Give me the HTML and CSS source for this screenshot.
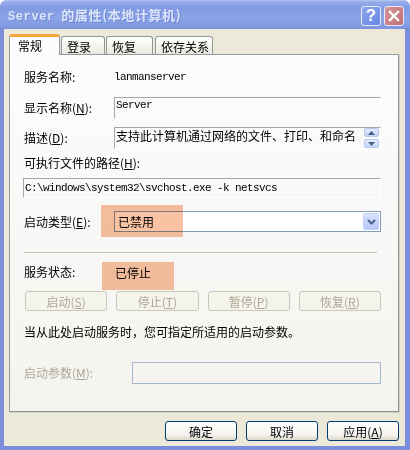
FILE: index.html
```html
<!DOCTYPE html>
<html>
<head>
<meta charset="utf-8">
<link rel="stylesheet" href="styles.css">
</head>
<body>
<div class="window">
  <div class="titlebar">
    <div class="title"><span class="tmono">Server</span> 的属性(本地计算机)</div>
    <div class="tbtn help">?</div>
    <div class="tbtn close">
      <svg width="12" height="12" viewBox="0 0 12 12"><path d="M2 2 L10 10 M10 2 L2 10" stroke="#fff" stroke-width="2.4" stroke-linecap="square" fill="none"/></svg>
    </div>
  </div>
  <div class="client">
    <div class="tabs">
      <div class="tab active">常规</div>
      <div class="tab t2">登录</div>
      <div class="tab t3">恢复</div>
      <div class="tab t4">依存关系</div>
    </div>
    <div class="panel">
      <div class="row r1">
        <div class="label">服务名称:</div>
        <div class="mono">lanmanserver</div>
      </div>
      <div class="row r2">
        <div class="label">显示名称(<u>N</u>):</div>
        <div class="ro mono">Server</div>
      </div>
      <div class="row r3">
        <div class="label">描述(<u>D</u>):</div>
        <div class="ro desc">
          <span class="desc-text">支持此计算机通过网络的文件、打印、和命名</span>
          <div class="spin">
            <div class="sbtn"><svg width="7" height="4" viewBox="0 0 7 4"><path d="M0 4 L3.5 0 L7 4 Z" fill="#4D6185"/></svg></div>
            <div class="sbtn"><svg width="7" height="4" viewBox="0 0 7 4"><path d="M0 0 L3.5 4 L7 0 Z" fill="#4D6185"/></svg></div>
          </div>
        </div>
      </div>
      <div class="line r4">可执行文件的路径(<u>H</u>):</div>
      <div class="ro path mono">C:\windows\system32\svchost.exe -k netsvcs</div>
      <div class="row r5">
        <div class="label">启动类型(<u>E</u>):</div>
        <div class="combo">
          <span class="combo-text">已禁用</span>
          <div class="drop"><svg width="9" height="6" viewBox="0 0 9 6"><path d="M1 1 L4.5 4.5 L8 1" stroke="#4D6185" stroke-width="2" fill="none"/></svg></div>
        </div>
      </div>
      <div class="sep"></div>
      <div class="row r6">
        <div class="label">服务状态:</div>
        <div class="status">已停止</div>
      </div>
      <div class="btnrow">
        <div class="dbtn">启动(<u>S</u>)</div>
        <div class="dbtn">停止(<u>T</u>)</div>
        <div class="dbtn">暂停(<u>P</u>)</div>
        <div class="dbtn">恢复(<u>R</u>)</div>
      </div>
      <div class="line note">当从此处启动服务时，您可指定所适用的启动参数。</div>
      <div class="row r7">
        <div class="label dis">启动参数(<u>M</u>):</div>
        <div class="param"></div>
      </div>
      <div class="mark mark1"></div>
      <div class="mark mark2"></div>
    </div>
    <div class="footer">
      <div class="btn">确定</div>
      <div class="btn">取消</div>
      <div class="btn">应用(<u>A</u>)</div>
    </div>
  </div>
</div>
</body>
</html>
```

FILE: styles.css
```css
* { box-sizing: border-box; }
html, body { margin: 0; padding: 0; background: #ffffff; }
body {
  font-family: "Noto Sans CJK SC", "Noto Sans", sans-serif;
  font-size: 12px;
  color: #000;
}
u { text-decoration: underline; text-underline-offset: 1px; }

.window {
  width: 410px;
  height: 450px;
  background: #7C8EDB;
  border-radius: 7px 7px 0 0;
  display: flex;
  flex-direction: column;
  overflow: hidden;
}

.titlebar {
  height: 29px;
  flex: none;
  display: flex;
  align-items: center;
  padding: 2px 6px 0 8px;
  background: linear-gradient(to bottom, #B8C8F2 0, #95ACEA 2px, #829BE3 8px, #8CA4E7 18px, #8098E1 27px, #7C8EDB 29px);
}
.title {
  flex: 1;
  color: #DCE6FA;
  font-weight: bold;
  font-size: 13px;
  line-height: 16px;
  letter-spacing: 0.6px;
  text-shadow: 1px 1px 0 #7086D4;
}
.tmono {
  font-family: "Liberation Mono", monospace;
  font-size: 12px;
  letter-spacing: 0.6px;
  margin-right: 3px;
}
.tbtn {
  width: 20px;
  height: 20px;
  border: 1px solid #E4EAFA;
  border-radius: 3px;
  display: flex;
  align-items: center;
  justify-content: center;
}
.help {
  background: linear-gradient(135deg, #8DA6F0, #6A86E4);
  color: #fff;
  font-family: "Liberation Sans", sans-serif;
  font-weight: bold;
  font-size: 17px;
  margin-right: 3px;
}
.close {
  background: linear-gradient(135deg, #D8959A, #BE6E73);
}

.client {
  flex: 1;
  margin: 0 5px 4px 4px;
  background: #ECE9D8;
  padding: 5px 6px 0 5px;
  display: flex;
  flex-direction: column;
}

.tabs {
  height: 20px;
  display: flex;
  align-items: flex-end;
  position: relative;
  z-index: 2;
}
.tab {
  height: 18px;
  border: 1px solid #919B9C;
  border-bottom: none;
  border-radius: 3px 3px 0 0;
  background: linear-gradient(to bottom, #FFFFFF, #F3F2EC 60%, #E9E8E0);
  padding: 2px 0 0 5px;
  line-height: 15px;
}
.tab.active {
  width: 51px;
  height: 21px;
  margin-bottom: -1px;
  background: #FCFCFE;
  border-top: 3px solid #F6A53A;
  padding: 1px 0 0 8px;
}
.t2 { width: 44px; margin-left: 1px; }
.t3 { width: 47px; margin-left: 1px; }
.t4 { width: 58px; margin-left: 2px; }

.panel {
  position: relative;
  width: 390px;
  height: 358px;
  flex: none;
  border: 1px solid #919B9C;
  border-right-color: #8A9396;
  border-bottom-color: #8A9396;
  box-shadow: 1px 1px 0 #D3D0C2;
  background: linear-gradient(to bottom, #FCFCFE, #F4F3EE);
  padding: 14px 17px 0 14px;
  display: flex;
  flex-direction: column;
}

.row { display: flex; align-items: center; }
.label { width: 90px; flex: none; line-height: 16px; }
.line { line-height: 16px; }
.mono {
  font-family: "Liberation Mono", monospace;
  font-size: 11px;
  letter-spacing: -0.6px;
}

.r1 { height: 16px; }
.r2 { margin-top: 12px; height: 22px; }
.r3 { margin-top: 8px; height: 22px; }
.r4 { margin-top: 6px; }
.ro {
  flex: 1;
  height: 22px;
  border-top: 1px solid #A7A6A0;
  border-left: 1px solid #A7A6A0;
  border-right: 1px solid #FFFFFF;
  border-bottom: 1px solid #FFFFFF;
  padding: 1px 0 0 1px;
  line-height: 13px;
}
.desc {
  display: flex;
  padding: 0 1px 0 1px;
  font-size: 12px;
  line-height: 15px;
}
.desc-text { flex: 1; padding-top: 0; }
.spin {
  width: 15px;
  display: flex;
  flex-direction: column;
  gap: 2px;
  padding-top: 0;
}
.sbtn {
  height: 9px;
  border: 1px solid #B9C8EC;
  border-radius: 2px;
  background: linear-gradient(to bottom, #E4ECFD, #C2D3FA);
  display: flex;
  align-items: center;
  justify-content: center;
}
.path {
  margin-top: 7px;
  flex: none;
  height: 20px;
  margin-left: -1px;
  padding: 2px 0 0 1px;
  line-height: 14px;
}

.r5 { margin-top: 13px; height: 21px; }
.combo {
  flex: 1;
  height: 21px;
  border: 1px solid #7F9DB9;
  background: #fff;
  display: flex;
  align-items: center;
  padding: 1px 1px 1px 3px;
}
.combo-text { flex: 1; }
.drop {
  width: 16px;
  height: 17px;
  border-radius: 2px;
  background: linear-gradient(to bottom, #D7E2FC, #B6C8F8);
  border: 1px solid #C3D2F6;
  display: flex;
  align-items: center;
  justify-content: center;
}

.sep {
  margin-top: 20px;
  margin-right: 4px;
  height: 2px;
  border-top: 1px solid #C8C6B8;
  border-bottom: 1px solid #FFFFFF;
}
.r6 { margin-top: 10px; height: 16px; }
.status { padding-left: 1px; }

.btnrow {
  margin-top: 11px;
  margin-left: 1px;
  display: grid;
  grid-template-columns: repeat(4, 1fr);
  gap: 9px;
}
.dbtn {
  height: 20px;
  border: 1px solid #CAC8BB;
  border-radius: 3px;
  background: #F5F4EA;
  color: #ACA899;
  display: flex;
  align-items: center;
  justify-content: center;
}

.note { margin-top: 13px; }
.r7 { margin-top: 22px; height: 22px; }
.r7 .label { width: 108px; }
.dis { color: #ACA899; }
.param {
  flex: 1;
  height: 22px;
  border: 1px solid #A4B6D2;
  background: transparent;
}

.mark {
  position: absolute;
  background: #F9C2A2;
  mix-blend-mode: multiply;
}
.mark1 { left: 91px; top: 150px; width: 82px; height: 32px; }
.mark2 { left: 92px; top: 207px; width: 72px; height: 28px; }

.footer {
  margin-top: 9px;
  display: flex;
  justify-content: flex-end;
  gap: 9px;
}
.btn {
  width: 72px;
  height: 20px;
  border: 1px solid #003C74;
  border-radius: 3px;
  background: linear-gradient(to bottom, #FFFFFF, #F4F3EE 70%, #DCD8CC);
  display: flex;
  align-items: center;
  justify-content: center;
}
```
